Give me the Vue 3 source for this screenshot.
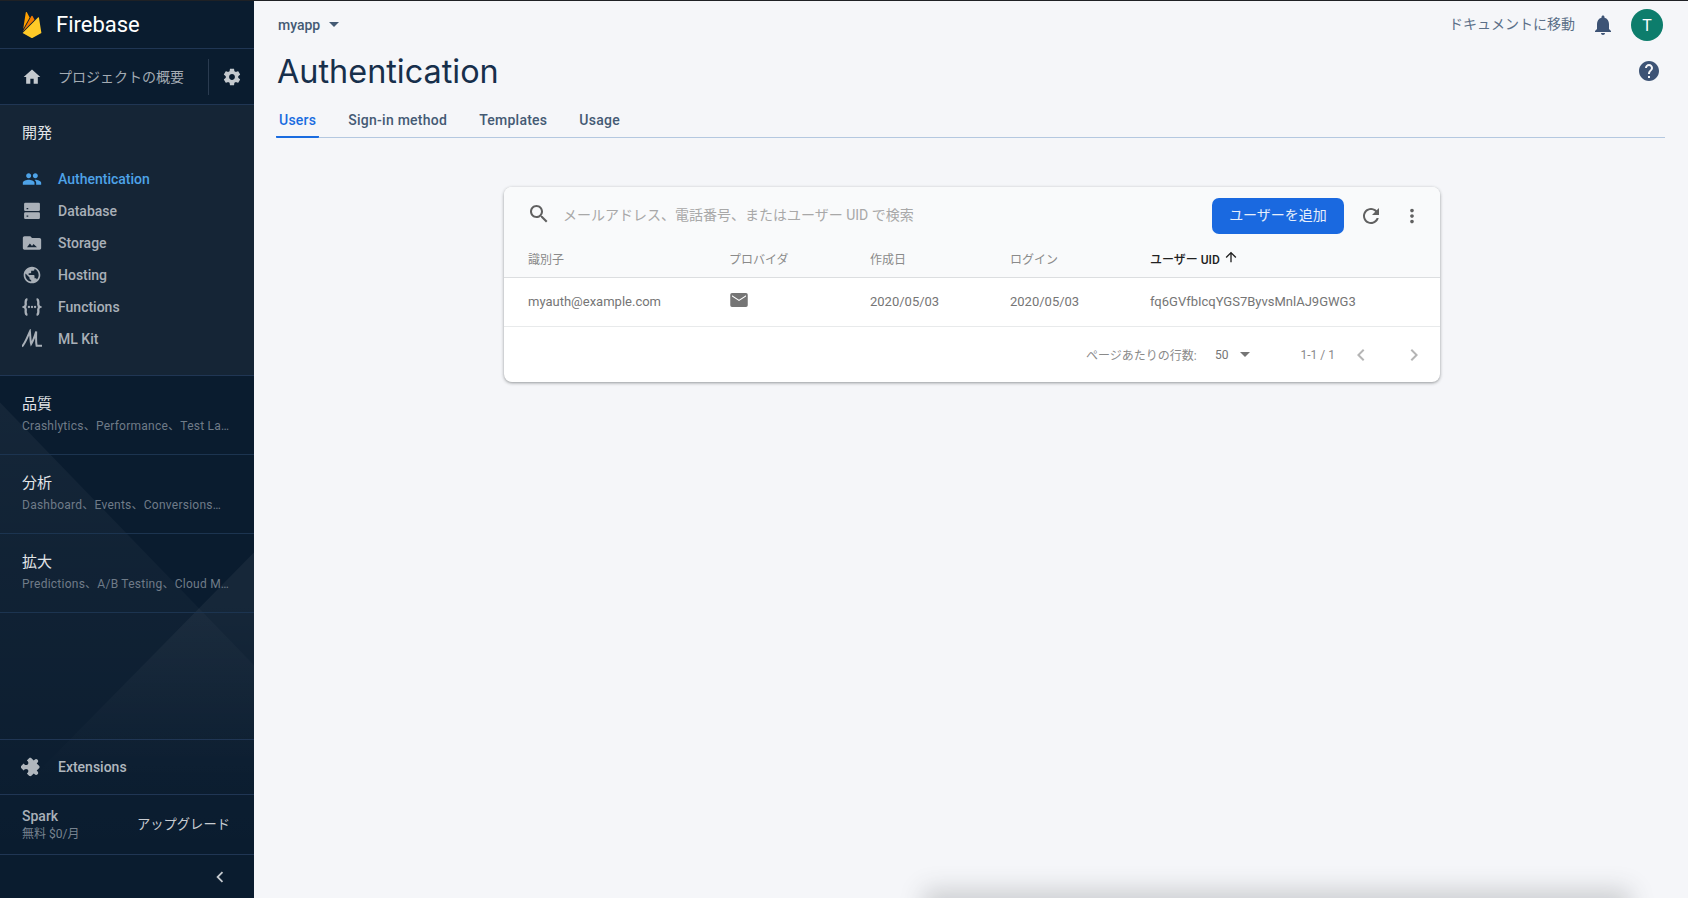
<template>
  <div class="page">
    <aside class="sidebar">
      <svg class="sidebar-bg" viewBox="0 0 254 898" preserveAspectRatio="none">
        <defs>
          <linearGradient id="fade-a" x1="0" y1="400" x2="0" y2="860" gradientUnits="userSpaceOnUse">
            <stop offset="0" stop-color="#fff" stop-opacity="0.045" />
            <stop offset="1" stop-color="#fff" stop-opacity="0" />
          </linearGradient>
          <linearGradient id="fade-b" x1="0" y1="600" x2="0" y2="780" gradientUnits="userSpaceOnUse">
            <stop offset="0" stop-color="#fff" stop-opacity="0.05" />
            <stop offset="1" stop-color="#fff" stop-opacity="0" />
          </linearGradient>
        </defs>
        <polygon points="0,402 254,665 254,860 0,860" fill="url(#fade-a)" />
        <polygon points="254,552 254,780 30,780" fill="url(#fade-b)" />
      </svg>
      <div class="brand">
        <svg class="flame" viewBox="0 0 24 24">
          <path fill="#ffa000" d="M3.89 15.672L6.255.461A.542.542 0 0 1 7.27.288l2.543 4.771z" />
          <path fill="#f57c00" d="M14.3 7.147l-1.82-3.482a.542.542 0 0 0-.96 0L3.53 17.984z" />
          <path fill="#ffca28" d="M20.684 19.364l-2.25-14a.54.54 0 0 0-.919-.295L3.316 19.365l7.856 4.427a1.621 1.621 0 0 0 1.588 0z" />
        </svg>
        <span>Firebase</span>
      </div>
      <div class="overview">
        <svg class="icon" viewBox="0 0 24 24"><path d="M10 20v-6h4v6h5v-8h3L12 3 2 12h3v8z" /></svg>
        <span class="overview-label">プロジェクトの概要</span>
        <div class="settings">
          <svg class="icon" viewBox="0 0 24 24"><path d="M19.43 12.98c.04-.32.07-.64.07-.98s-.03-.66-.07-.98l2.11-1.65c.19-.15.24-.42.12-.64l-2-3.46c-.12-.22-.39-.3-.61-.22l-2.49 1c-.52-.4-1.08-.73-1.69-.98l-.38-2.65C14.46 2.18 14.25 2 14 2h-4c-.25 0-.46.18-.49.42l-.38 2.65c-.61.25-1.17.59-1.69.98l-2.49-1c-.23-.09-.49 0-.61.22l-2 3.46c-.13.22-.07.49.12.64l2.11 1.65c-.04.32-.07.65-.07.98s.03.66.07.98l-2.11 1.65c-.19.15-.24.42-.12.64l2 3.46c.12.22.39.3.61.22l2.49-1c.52.4 1.08.73 1.69.98l.38 2.65c.03.24.24.42.49.42h4c.25 0 .46-.18.49-.42l.38-2.65c.61-.25 1.17-.59 1.69-.98l2.49 1c.23.09.49 0 .61-.22l2-3.46c.12-.22.07-.49-.12-.64l-2.11-1.65zM12 15.5c-1.93 0-3.5-1.57-3.5-3.5s1.57-3.5 3.5-3.5 3.5 1.57 3.5 3.5-1.57 3.5-3.5 3.5z" /></svg>
        </div>
      </div>
      <div class="develop">
        <div class="section-title develop-title">開発</div>
        <a v-for="item in navItems" :key="item.label" class="nav-item" :class="{ active: item.active }">
          <svg class="icon" viewBox="0 0 24 24">
            <path v-if="item.path" :d="item.path" fill-rule="evenodd" />
            <g v-else-if="item.label === 'Functions'">
              <path fill="none" stroke="currentColor" stroke-width="2.8" d="M6.500 2.500C3.500 3 4.500 7 4.500 9s-1 2.500-2 3c1 .5 2 1 2 3s-1 6 2 6.500" />
              <path fill="none" stroke="currentColor" stroke-width="2.800" d="M17.500 2.500c3 .5 2 4.500 2 6.500s1 2.500 2 3c-1 .5-2 1-2 3s1 6-2 6.500" />
              <circle cx="8.300" cy="12" r="1.400" />
              <circle cx="12" cy="12" r="1.400" />
              <circle cx="15.700" cy="12" r="1.400" />
            </g>
            <path v-else fill="none" stroke="currentColor" stroke-width="2.400" d="M0 21C4 17 7 8 9.500 3c.5 5 .500 11 1.500 15C13.500 14 15.500 8 17 3c0 6-.5 12 .5 17H24" />
          </svg>
          <span>{{ item.label }}</span>
        </a>
      </div>
      <div v-for="group in groups" :key="group.title" class="group">
        <div class="section-title">{{ group.title }}</div>
        <div class="group-sub">{{ group.sub }}</div>
      </div>
      <div class="sidebar-spacer"></div>
      <a class="extensions">
        <svg class="icon extension-icon" viewBox="0 0 24 24"><path d="M20.500 11H19V7c0-1.100-.9-2-2-2h-4V3.500C13 2.120 11.880 1 10.500 1S8 2.120 8 3.500V5H4c-1.100 0-1.990.9-1.990 2v3.800H3.500c1.490 0 2.700 1.210 2.700 2.700s-1.210 2.700-2.700 2.700H2V20c0 1.100.9 2 2 2h3.800v-1.500c0-1.490 1.210-2.700 2.700-2.700 1.490 0 2.700 1.210 2.700 2.700V22H17c1.100 0 2-.9 2-2v-4h1.500c1.380 0 2.500-1.120 2.500-2.500S21.880 11 20.500 11z" /></svg>
        <span>Extensions</span>
      </a>
      <div class="plan">
        <div>
          <div class="plan-name">Spark</div>
          <div class="plan-price">無料 $0/月</div>
        </div>
        <span class="upgrade">アップグレード</span>
      </div>
      <div class="collapse">
        <svg viewBox="0 0 24 24" class="collapse-icon"><path d="M15.410 7.410 14 6l-6 6 6 6 1.410-1.410L10.830 12z" /></svg>
      </div>
    </aside>

    <main class="main">
      <div class="topbar">
        <div class="project">
          <span>myapp</span>
          <i class="caret"></i>
        </div>
        <div class="top-right">
          <span class="docs">ドキュメントに移動</span>
          <svg class="bell" viewBox="0 0 24 24"><path d="M12 22c1.100 0 2-.9 2-2h-4c0 1.100.9 2 2 2zm6-6v-5c0-3.070-1.630-5.640-4.500-6.320V4c0-.83-.67-1.500-1.500-1.500s-1.500.67-1.500 1.500v.68C7.640 5.360 6 7.920 6 11v5l-2 2v1h16v-1l-2-2z" /></svg>
          <div class="avatar">T</div>
        </div>
      </div>
      <div class="title-row">
        <h1>Authentication</h1>
        <svg class="help" viewBox="0 0 24 24"><path d="M12 2C6.480 2 2 6.480 2 12s4.480 10 10 10 10-4.480 10-10S17.520 2 12 2zm1 17h-2v-2h2v2zm2.070-7.750-.9.920C13.450 12.900 13 13.500 13 15h-2v-.5c0-1.100.45-2.100 1.170-2.830l1.240-1.260c.37-.36.590-.86.590-1.410 0-1.100-.9-2-2-2s-2 .9-2 2H8c0-2.210 1.790-4 4-4s4 1.790 4 4c0 .88-.36 1.680-.93 2.250z" /></svg>
      </div>
      <nav class="tabs">
        <a v-for="(tab, i) in tabs" :key="tab" class="tab" :class="{ selected: i === 0 }">{{ tab }}</a>
      </nav>

      <section class="card">
        <div class="card-head">
          <div class="search-row">
            <svg class="search-icon" viewBox="0 0 24 24"><path d="M15.500 14h-.79l-.28-.27C15.410 12.590 16 11.110 16 9.500 16 5.910 13.090 3 9.500 3S3 5.910 3 9.500 5.910 16 9.500 16c1.610 0 3.090-.59 4.230-1.570l.27.28v.79l5 4.990L20.490 19l-4.990-5zm-6 0C7.010 14 5 11.990 5 9.500S7.010 5 9.500 5 14 7.010 14 9.500 11.990 14 9.500 14z" /></svg>
            <span class="placeholder">メールアドレス、電話番号、またはユーザー UID で検索</span>
            <button class="add-btn">ユーザーを追加</button>
            <svg class="refresh" viewBox="0 0 24 24"><path d="M17.650 6.350C16.200 4.900 14.210 4 12 4c-4.420 0-7.990 3.580-7.990 8s3.570 8 7.990 8c3.730 0 6.840-2.550 7.730-6h-2.080c-.82 2.330-3.040 4-5.650 4-3.310 0-6-2.690-6-6s2.690-6 6-6c1.660 0 3.140.69 4.220 1.780L13 11h7V4l-2.350 2.350z" /></svg>
            <svg class="more" viewBox="0 0 24 24"><path d="M12 8c1.100 0 2-.9 2-2s-.9-2-2-2-2 .9-2 2 .9 2 2 2zm0 2c-1.100 0-2 .9-2 2s.9 2 2 2 2-.9 2-2-.9-2-2-2zm0 6c-1.100 0-2 .9-2 2s.9 2 2 2 2-.9 2-2-.9-2-2-2z" /></svg>
          </div>
          <div class="cols col-head">
            <span>識別子</span>
            <span>プロバイダ</span>
            <span>作成日</span>
            <span>ログイン</span>
            <span class="sorted">ユーザー UID
              <svg viewBox="0 0 24 24"><path d="M4 12l1.410 1.410L11 7.830V20h2V7.830l5.580 5.590L20 12l-8-8-8 8z" /></svg>
            </span>
          </div>
        </div>
        <div class="cols row">
          <span>myauth@example.com</span>
          <span class="provider">
            <svg viewBox="0 0 20 16"><path fill-rule="evenodd" d="M2 0h16a2 2 0 0 1 2 2v12a2 2 0 0 1-2 2H2a2 2 0 0 1-2-2V2a2 2 0 0 1 2-2zm0 4 8 5 8-5V2.600l-8 5-8-5z" /></svg>
          </span>
          <span>2020/05/03</span>
          <span>2020/05/03</span>
          <span>fq6GVfbIcqYGS7ByvsMnlAJ9GWG3</span>
        </div>
        <div class="pager">
          <span class="per-page">ページあたりの行数:</span>
          <span class="size">50</span>
          <i class="caret grey"></i>
          <span class="range">1-1 / 1</span>
          <svg class="page-arrow first" viewBox="0 0 24 24"><path d="M15.410 7.410 14 6l-6 6 6 6 1.410-1.410L10.830 12z" /></svg>
          <svg class="page-arrow" viewBox="0 0 24 24"><path d="M10 6 8.590 7.410 13.170 12l-4.580 4.590L10 18l6-6z" /></svg>
        </div>
      </section>
      <div class="toast-shadow"></div>
    </main>
  </div>
</template>

<script setup>
const navItems = [
  {
    label: 'Authentication',
    active: true,
    path: 'M16 11c1.660 0 2.990-1.340 2.990-3S17.660 5 16 5c-1.660 0-3 1.340-3 3s1.340 3 3 3zm-8 0c1.660 0 2.990-1.340 2.990-3S9.660 5 8 5C6.340 5 5 6.340 5 8s1.340 3 3 3zm0 2c-2.330 0-7 1.170-7 3.500V19h14v-2.500c0-2.330-4.670-3.500-7-3.500zm8 0c-.29 0-.62.02-.97.05 1.160.84 1.970 1.970 1.970 3.450V19h6v-2.500c0-2.330-4.670-3.500-7-3.500z',
  },
  {
    label: 'Database',
    path: 'M4 2h16a1.500 1.500 0 0 1 1.500 1.500v7a1.500 1.500 0 0 1-1.500 1.500H4a1.500 1.500 0 0 1-1.500-1.500v-7A1.500 1.500 0 0 1 4 2zm1.500 6.500V10h2V8.500zM4 13.500h16a1.500 1.500 0 0 1 1.500 1.500v5a1.500 1.500 0 0 1-1.500 1.500H4A1.500 1.500 0 0 1 2.500 20v-5A1.500 1.500 0 0 1 4 13.500zm1.500 4V19h2v-1.500z',
  },
  {
    label: 'Storage',
    path: 'M10 4H3C1.900 4 1 4.900 1 6v12c0 1.100.9 2 2 2h18c1.100 0 2-.9 2-2V8c0-1.100-.9-2-2-2H12zM6 17l3.500-4.500 2.500 3 1.800-2.200L18 17z',
  },
  {
    label: 'Hosting',
    path: 'M12 2C6.480 2 2 6.480 2 12s4.480 10 10 10 10-4.480 10-10S17.520 2 12 2zm-1 17.930c-3.950-.49-7-3.850-7-7.930 0-.62.08-1.210.21-1.790L9 15v1c0 1.100.9 2 2 2v1.930zm6.900-2.540c-.26-.81-1-1.390-1.900-1.390h-1v-3c0-.55-.45-1-1-1H8v-2h2c.55 0 1-.45 1-1V7h2c1.100 0 2-.9 2-2v-.41c2.930 1.190 5 4.060 5 7.410 0 2.080-.8 3.970-2.100 5.390z',
  },
  { label: 'Functions' },
  { label: 'ML Kit' },
]

const groups = [
  { title: '品質', sub: 'Crashlytics、Performance、Test La…' },
  { title: '分析', sub: 'Dashboard、Events、Conversions…' },
  { title: '拡大', sub: 'Predictions、A/B Testing、Cloud M…' },
]

const tabs = ['Users', 'Sign-in method', 'Templates', 'Usage']
</script>

<style>
html,
body {
  margin: 0;
  background: #f5f6f9;
}
</style>

<style scoped>
.page {
  display: flex;
  width: 1688px;
  height: 898px;
  overflow: hidden;
  box-sizing: border-box;
  border-top: 1px solid #1f2125;
  font-family: Roboto, "Noto Sans CJK JP", sans-serif;
  background: #f5f6f9;
}

.sidebar {
  position: relative;
  display: flex;
  flex-direction: column;
  flex: none;
  width: 254px;
  background: #0a1c2f;
  color: #b6bdc4;
}

.sidebar-bg {
  position: absolute;
  inset: 0;
  width: 100%;
  height: 100%;
  pointer-events: none;
}

.sidebar > *:not(.sidebar-bg) {
  position: relative;
}

.icon {
  flex: none;
  width: 20px;
  height: 20px;
  fill: currentColor;
}

.brand {
  display: flex;
  align-items: center;
  box-sizing: border-box;
  height: 48px;
  padding-left: 19px;
  border-bottom: 1px solid #203654;
  color: #fff;
  font-size: 22px;
}

.flame {
  width: 26px;
  height: 26px;
  margin-right: 11px;
}

.overview {
  display: flex;
  align-items: center;
  box-sizing: border-box;
  height: 56px;
  padding-left: 22px;
  border-bottom: 1px solid #203654;
  font-size: 14px;
  color: #a3abb3;
}

.overview .icon {
  color: #c4c9ce;
}

.overview-label {
  flex: 1;
  margin: -2px 0 0 16px;
}

.settings {
  display: flex;
  align-items: center;
  height: 36px;
  padding: 0 12px 0 13px;
  border-left: 1px solid #2a3b50;
}

.develop {
  height: 271px;
  padding-top: 17px;
  box-sizing: border-box;
  border-bottom: 1px solid #203654;
  background: #152536;
}

.section-title {
  padding-left: 22px;
  font-size: 15px;
  line-height: 22px;
  color: #e3e6e9;
}

.develop-title {
  margin-bottom: 19px;
}

.nav-item {
  display: flex;
  align-items: center;
  height: 32px;
  padding-left: 22px;
  font-size: 14px;
  font-weight: 500;
  color: #a9b0b8;
}

.nav-item .icon {
  margin-right: 16px;
}

.nav-item.active {
  color: #4ea3e8;
}

.group {
  box-sizing: border-box;
  height: 79px;
  padding-top: 17px;
  border-bottom: 1px solid #1c3450;
}

.group-sub {
  padding-top: 3px;
  padding-left: 22px;
  font-size: 12px;
  line-height: 17px;
  letter-spacing: 0.25px;
  color: #6f7b88;
  white-space: nowrap;
}

.sidebar-spacer {
  flex: 1;
}

.extensions {
  display: flex;
  align-items: center;
  box-sizing: border-box;
  height: 55px;
  padding-left: 22px;
  border-top: 1px solid #203654;
  font-size: 14px;
  font-weight: 500;
  color: #b0b7be;
}

.extension-icon {
  margin-right: 16px;
  transform: rotate(45deg);
}

.plan {
  display: flex;
  align-items: center;
  justify-content: space-between;
  box-sizing: border-box;
  height: 60px;
  padding: 0 24px 0 22px;
  border-top: 1px solid #203654;
}

.plan-name {
  font-size: 14px;
  font-weight: 500;
  line-height: 18px;
  color: #a9b0b8;
}

.plan-price {
  padding-top: 1px;
  font-size: 12px;
  line-height: 17px;
  color: #78838f;
}

.upgrade {
  margin-top: -2px;
  font-size: 13.3px;
  color: #c8ccd1;
}

.collapse {
  display: flex;
  justify-content: flex-end;
  align-items: center;
  height: 44px;
  padding-right: 23px;
  box-sizing: border-box;
  border-top: 1px solid #203654;
}

.collapse-icon {
  width: 22px;
  height: 22px;
  fill: #c4c9ce;
}

.main {
  position: relative;
  flex: 1;
  padding: 0 23px 0 22px;
  min-width: 0;
}

.topbar {
  display: flex;
  align-items: center;
  justify-content: space-between;
  height: 48px;
}

.project {
  display: flex;
  align-items: center;
  font-size: 14px;
  font-weight: 500;
  color: #445a74;
  margin-top: -1px;
  margin-left: 2px;
}

.caret {
  width: 0;
  height: 0;
  margin-left: 9px;
  border-left: 5px solid transparent;
  border-right: 5px solid transparent;
  border-top: 5px solid #445a74;
}

.top-right {
  display: flex;
  align-items: center;
  margin-right: 2px;
}

.docs {
  margin-top: -5px;
  font-size: 14px;
  color: #5b6f88;
}

.bell {
  width: 24px;
  height: 24px;
  margin: 0 16px 0 16px;
  fill: #3d5375;
}

.avatar {
  display: flex;
  align-items: center;
  justify-content: center;
  width: 32px;
  height: 32px;
  border-radius: 50%;
  background: #0d7d6c;
  color: #fff;
  font-size: 16px;
}

.title-row {
  display: flex;
  align-items: center;
  justify-content: space-between;
  height: 44px;
}

h1 {
  margin: 2px 0 0 1px;
  font-family: Inter, Roboto, sans-serif;
  font-size: 32.4px;
  font-weight: 400;
  line-height: 44px;
  color: #172f4b;
}

.help {
  width: 24px;
  height: 24px;
  margin-right: 4px;
  fill: #3d5375;
}

.tabs {
  display: flex;
  height: 44px;
  margin-top: 1px;
  border-bottom: 1px solid #b4c8e0;
  box-sizing: border-box;
}

.tab {
  display: flex;
  align-items: center;
  margin-right: 30px;
  padding: 8px 1px 0 1px;
  font-size: 14px;
  font-weight: 500;
  letter-spacing: 0.25px;
  color: #445a74;
}

.tab.selected {
  margin-bottom: -1px;
  padding: 10px 3px 0 3px;
  margin-right: 28px;
  color: #1a6ce0;
  border-bottom: 2px solid #1a6ce0;
  border-radius: 1px;
}

.card {
  width: 936px;
  margin: 49px 0 0 228px;
  border-radius: 8px;
  background: #fff;
  box-shadow: 0 1px 3px rgba(60, 64, 67, 0.45), 0 1px 4px rgba(60, 64, 67, 0.1);
  overflow: hidden;
  color: #757575;
  font-size: 13px;
}

.card-head {
  height: 91px;
  box-sizing: border-box;
  background: #f9fafb;
  border-bottom: 1px solid #dcdee0;
}

.search-row {
  display: flex;
  align-items: center;
  height: 48px;
  padding: 10px 17px 0 24px;
  box-sizing: border-box;
}

.search-icon {
  flex: none;
  width: 24px;
  height: 24px;
  margin: -4px 0 0 -1px;
  fill: #616161;
}

.placeholder {
  flex: 1;
  margin: -4px 0 0 12px;
  font-size: 14px;
  color: #a8a8a8;
}

.add-btn {
  flex: none;
  width: 132px;
  height: 36px;
  padding: 0 0 4px;
  border: 0;
  border-radius: 7px;
  background: #1a69e0;
  color: #e6eefb;
  font-family: inherit;
  font-size: 14px;
}

.refresh {
  flex: none;
  width: 24px;
  height: 24px;
  margin-left: 15px;
  fill: #616161;
}

.more {
  flex: none;
  width: 22px;
  height: 22px;
  margin-left: 18px;
  fill: #616161;
}

.cols {
  display: grid;
  grid-template-columns: 201px 141px 140px 140px 1fr;
  align-items: center;
  padding-left: 24px;
}

.col-head {
  height: 42px;
  padding-top: 5px;
  box-sizing: border-box;
  font-size: 12px;
  color: #8a8a8a;
}

.sorted {
  display: flex;
  align-items: center;
  font-weight: 500;
  color: #212121;
  gap: 3px;
}

.sorted svg {
  width: 16px;
  height: 16px;
  margin-top: -3px;
  fill: #212121;
}

.row {
  height: 49px;
  padding-bottom: 1px;
  box-sizing: border-box;
  border-bottom: 1px solid #e8eaeb;
}

.provider {
  display: flex;
  margin: -3px 0 0 1px;
}

.provider svg {
  width: 18px;
  height: 14px;
  fill: #757575;
}

.pager {
  display: flex;
  align-items: center;
  height: 55px;
  padding-left: 582px;
  font-size: 12px;
  color: #8a8a8a;
}

.per-page {
  width: 129px;
}

.size {
  color: #757575;
}

.caret.grey {
  margin-left: 11px;
  border-top-color: #757575;
}

.range {
  margin-left: 51px;
}

.page-arrow {
  width: 24px;
  height: 24px;
  fill: #b5b5b5;
  margin-left: 29px;
}

.page-arrow.first {
  margin-left: 14px;
}

.toast-shadow {
  position: absolute;
  left: 678px;
  bottom: -20px;
  width: 690px;
  height: 20px;
  box-shadow: 0 0 24px 8px rgba(60, 64, 67, 0.22);
}
</style>
